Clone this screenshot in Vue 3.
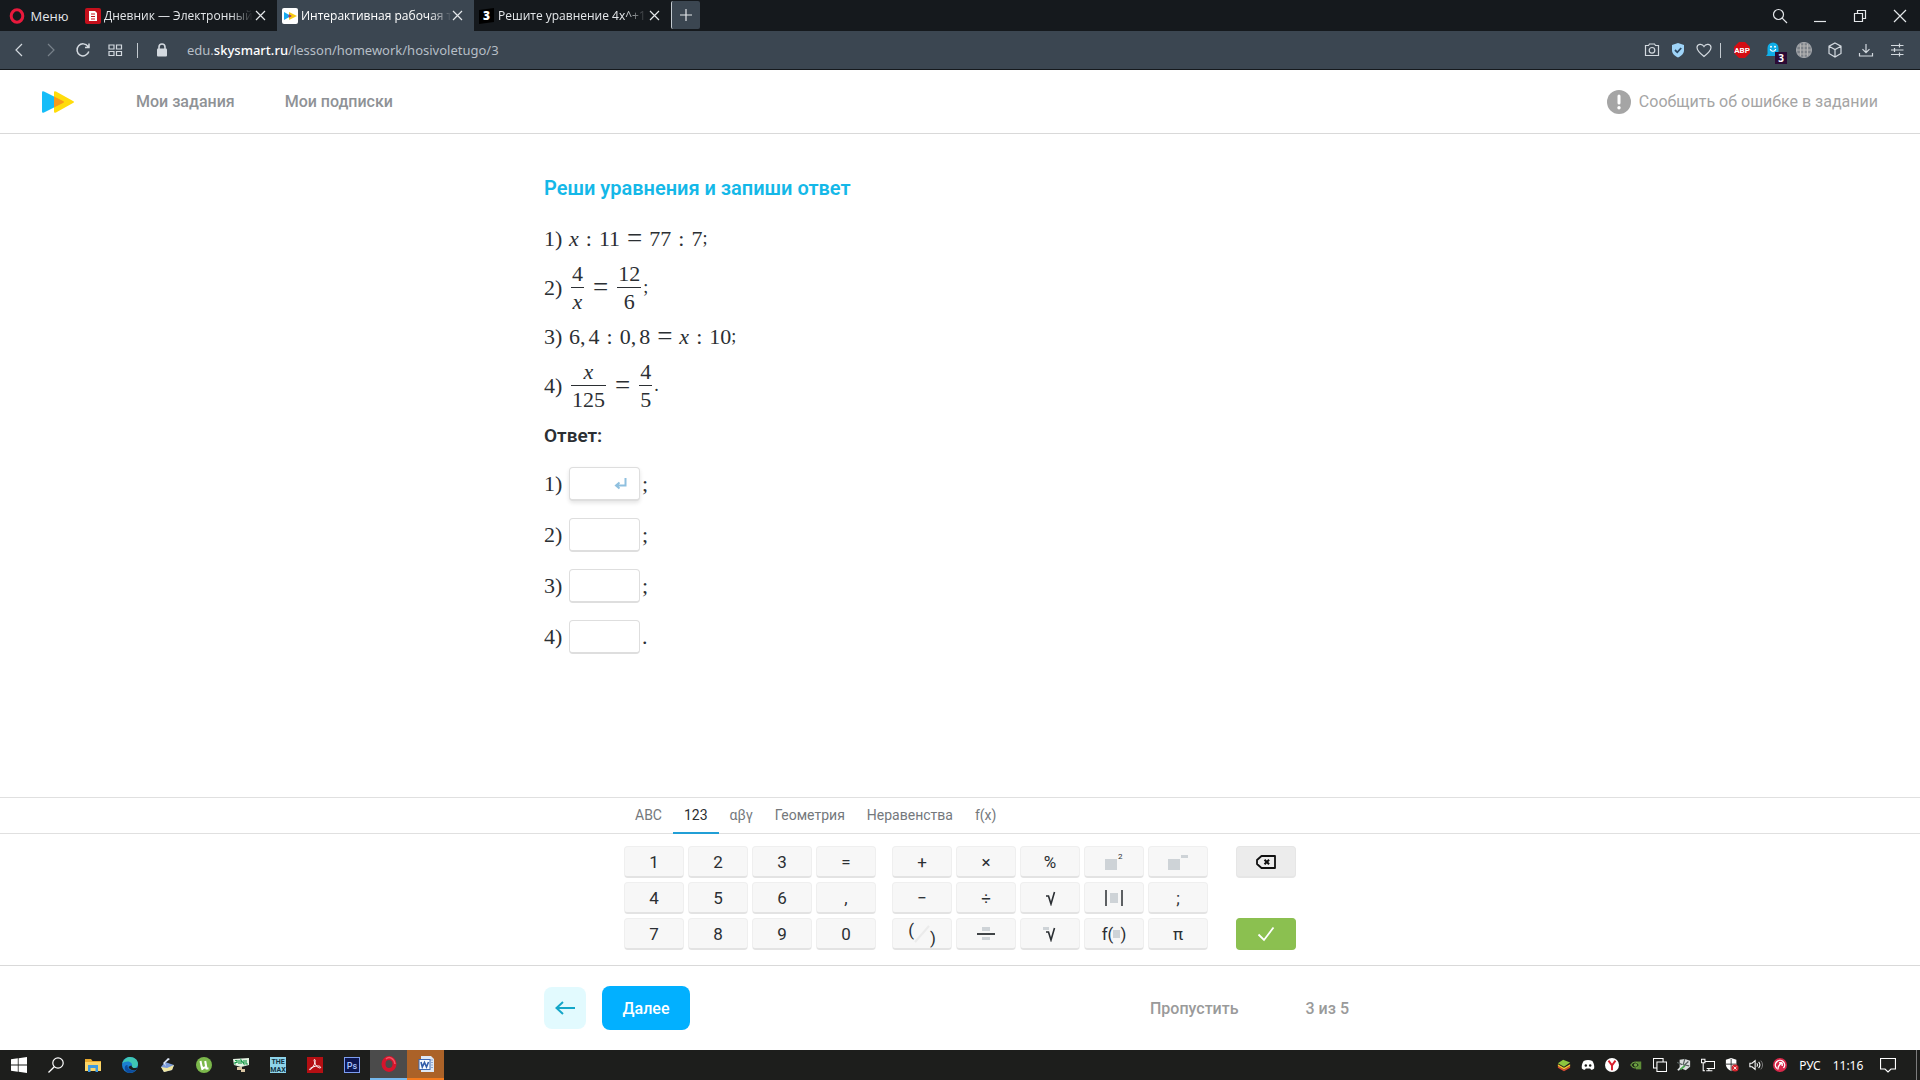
<script setup>
import { ref } from 'vue';

const tabs = [
  { id: 'diary', title: 'Дневник — Электронный' },
  { id: 'sky', title: 'Интерактивная рабочая т' },
  { id: 'znanija', title: 'Решите уравнение 4x^+1' },
];
const activeTab = ref('sky');

// условия: строка или дробь [числитель, знаменатель]
const equations = [
  ['x', ':', '11', '=', '77', ':', '7', ';'],
  [['4', 'x'], '=', ['12', '6'], ';'],
  ['6', ',', '4', ':', '0', ',', '8', '=', 'x', ':', '10', ';'],
  [['x', '125'], '=', ['4', '5'], '.'],
];

const answers = ref(['', '', '', '']);

const layouts = ['ABC', '123', 'αβγ', 'Геометрия', 'Неравенства', 'f(x)'];
const layout = ref('123');

const digits = ['1', '2', '3', '=', '4', '5', '6', ',', '7', '8', '9', '0'];
const operators = ['+', '×', '%', 'square', 'power', '−', '÷', '√', 'abs', ';', 'parens', 'frac', 'root', 'func', 'π'];

const tokenClass = (t) => {
  if (t === 'x') return 'var';
  if (t === ':') return 'rel';
  if (t === '=') return 'rel eq';
  if (t === ',') return 'comma';
  if (t === ';' || t === '.') return 'end';
  return '';
};

const press = (key) => {
  if (key.length === 1) answers.value[0] += key;
};
const erase = () => {
  answers.value[0] = answers.value[0].slice(0, -1);
};
</script>

<template>
  <div class="screen">
    <!-- вкладки браузера -->
    <div class="tabbar">
      <button class="menu">
        <svg width="16" height="16" viewBox="0 0 16 16"><ellipse cx="8" cy="8" rx="5.800" ry="6.200" fill="none" stroke="#e8193c" stroke-width="3" /></svg>
        Меню
      </button>
      <div v-for="tab in tabs" :key="tab.id" class="tab" :class="{ active: tab.id === activeTab }">
        <button class="tab-main" @click="activeTab = tab.id">
          <svg v-if="tab.id === 'diary'" width="16" height="16" viewBox="0 0 16 16">
            <rect width="16" height="16" rx="2" fill="#c4101c" />
            <path d="M4 3h6l2 2v8H4z" fill="#fff" />
            <path d="M6 6h4M6 8.5h4M6 11h4" stroke="#c4101c" stroke-width="1.2" />
          </svg>
          <svg v-else-if="tab.id === 'sky'" width="16" height="16" viewBox="0 0 16 16">
            <rect width="16" height="16" rx="2" fill="#fff" />
            <path d="M2 4l7 4-7 4z" fill="#16a9ee" />
            <path d="M7 4l8 4-8 4z" fill="#f6c914" />
            <path d="M7 6.8L9.2 8 7 9.2z" fill="#9b3c7c" stroke="#9b3c7c" />
          </svg>
          <svg v-else width="16" height="16" viewBox="0 0 16 16">
            <path d="M0 2l15-2v14l-15 2z" fill="#000" />
            <text x="4" y="12" font-size="12" font-weight="800" fill="#fff" font-family="Open Sans, sans-serif">3</text>
          </svg>
          <span class="tab-title">{{ tab.title }}</span>
        </button>
        <button class="tab-close" aria-label="Закрыть вкладку">
          <svg width="11" height="11" viewBox="0 0 11 11"><path d="M1 1l9 9M10 1l-9 9" /></svg>
        </button>
      </div>
      <button class="new-tab" aria-label="Новая вкладка">
        <svg width="12" height="12" viewBox="0 0 12 12"><path d="M6 0v12M0 6h12" /></svg>
      </button>
      <div class="window-buttons">
        <button aria-label="Поиск вкладок"><svg width="16" height="16" viewBox="0 0 16 16"><circle cx="6.5" cy="6.5" r="5" /><path d="M10.2 10.2L15 15" /></svg></button>
        <button aria-label="Свернуть"><svg width="14" height="14" viewBox="0 0 14 14"><path d="M1 12.5h12" /></svg></button>
        <button aria-label="Развернуть"><svg width="14" height="14" viewBox="0 0 14 14"><path d="M1.5 4.5h8v8h-8zM4.5 4.5v-3h8v8h-3" /></svg></button>
        <button aria-label="Закрыть"><svg width="14" height="14" viewBox="0 0 14 14"><path d="M1 1l12 12M13 1L1 13" /></svg></button>
      </div>
    </div>

    <!-- адресная строка -->
    <div class="toolbar">
      <button aria-label="Назад"><svg viewBox="0 0 16 16"><path d="M11 2L5 8l6 6" /></svg></button>
      <button class="dim" aria-label="Вперёд"><svg viewBox="0 0 16 16"><path d="M5 2l6 6-6 6" /></svg></button>
      <button aria-label="Обновить"><svg viewBox="0 0 16 16"><path d="M13.8 9.5A6 6 0 1 1 13 4.500M14 1.500v4h-4" stroke-width="1.5" /></svg></button>
      <button aria-label="Экспресс-панель"><svg viewBox="0 0 16 16"><path d="M2 3h5v4H2zM9.5 3h5v4h-5zM2 9.5h5v4H2zM9.5 9.5h5v4h-5z" /></svg></button>
      <span class="divider"></span>
      <svg class="lock" width="12" height="14" viewBox="0 0 12 14"><path d="M3 6V4a3 3 0 0 1 6 0v2" fill="none" stroke="#d3d9df" stroke-width="1.6" /><rect x="1" y="5.5" width="10" height="8" rx="1" fill="#d3d9df" /></svg>
      <a class="url" href="#">edu.<b>skysmart.ru</b>/lesson/homework/hosivoletugo/3</a>
      <div class="page-actions">
        <button aria-label="Снимок"><svg viewBox="0 0 16 16"><path d="M1.5 3.5h3l1-1.500h5l1 1.500h3v10h-13z" /><circle cx="8" cy="8.3" r="2.8" /></svg></button>
        <button aria-label="Защита"><svg viewBox="0 0 16 16"><path d="M8 1l6 2v5c0 4-3 6-6 7.500C5 14 2 12 2 8V3z" fill="#9fd4f8" stroke="none" /><path d="M5 8l2.300 2.300L11.200 6" stroke="#2b4a66" stroke-width="1.8" /></svg></button>
        <button aria-label="В закладки"><svg viewBox="0 0 16 16"><path d="M8 14.500C3 10.500 1 8.500 1 5.500 1 2 6 1 8 4.500 10 1 15 2 15 5.500c0 3-2 5-7 9z" /></svg></button>
      </div>
      <span class="divider right"></span>
      <div class="extensions">
        <button aria-label="AdBlock Plus">
          <svg viewBox="0 0 16 16"><path d="M5 0h6l5 5v6l-5 5H5l-5-5V5z" fill="#d40d12" stroke="none" /><text x="8" y="11" text-anchor="middle" font-size="8" font-weight="700" fill="#fff" stroke="none" font-family="Roboto, sans-serif">ABP</text></svg>
        </button>
        <button class="ghostery" aria-label="Ghostery">
          <svg viewBox="0 0 16 16"><path d="M2.500 6a5.500 5.500 0 0 1 11 0v6l1.500 2H1l1.500-2z" fill="#10aee8" stroke="none" /><path d="M5.300 7c.6 3 4.800 3 5.400 0" stroke="#fff" /><circle cx="6" cy="4.700" r="1" fill="#fff" stroke="none" /><circle cx="10" cy="4.700" r="1" fill="#fff" stroke="none" /></svg>
          <span class="counter">3</span>
        </button>
        <button aria-label="Прокси"><svg viewBox="0 0 16 16"><circle cx="8" cy="8" r="7.500" fill="#7b8087" stroke="#9a9ea4" /><path d="M8 .5v15M.5 8h15M2 4h12M2 12h12M4.500 2v12M11.500 2v12" stroke="#b3b3b3" /></svg></button>
        <button aria-label="Расширения"><svg viewBox="0 0 16 16"><path d="M8 1l6 3.200v7.300L8 15l-6-3.500V4.200zM2 4.200l6 3.300 6-3.300M8 7.500V15" /></svg></button>
        <button aria-label="Загрузки"><svg viewBox="0 0 16 16"><path d="M8 2v8.500M4.500 7.200L8 10.700l3.500-3.500M1.500 11v3h13v-3" /></svg></button>
        <button aria-label="Простые настройки"><svg viewBox="0 0 16 16"><path d="M2 3.500h12.500M2 8h12.500M2 12.500h12.500M10.500 1.500v4M5.500 6v4M10.500 10.500v4" /></svg></button>
      </div>
    </div>

    <header class="header">
      <a class="logo" href="#" aria-label="Skysmart">
        <svg width="34" height="24" viewBox="0 0 34 24">
          <path d="M1 2.500q0-2 2-1L22 11q2 1 0 2L3 22.500q-2 1-2-1z" fill="#16bdf8" />
          <path d="M13 2.500q0-2 2-1L32 11q2 1 0 2L15 22.500q-2 1-2-1z" fill="#ffdc0c" />
          <path d="M13 6.500L22 11q2 1 0 2l-9 4.500z" fill="#f79a1c" />
        </svg>
      </a>
      <nav class="nav">
        <a href="#">Мои задания</a>
        <a href="#">Мои подписки</a>
      </nav>
      <button class="report">
        <svg width="24" height="24" viewBox="0 0 24 24"><circle cx="12" cy="12" r="12" fill="#a5a5a5" /><path d="M12 6v7" stroke="#fff" stroke-width="3" stroke-linecap="round" /><circle cx="12" cy="17.800" r="1.700" fill="#fff" /></svg>
        Сообщить об ошибке в задании
      </button>
    </header>

    <main class="content">
      <div class="column">
        <h1>Реши уравнения и запиши ответ</h1>
        <div v-for="(eq, i) in equations" :key="i" class="equation">
          <span class="number">{{ i + 1 }})</span>
          <template v-for="(t, j) in eq" :key="j">
            <span v-if="Array.isArray(t)" class="fraction">
              <span v-for="(part, k) in t" :key="k" :class="tokenClass(part)">{{ part }}</span>
            </span>
            <span v-else :class="tokenClass(t)">{{ t }}</span>
          </template>
        </div>
        <h2>Ответ:</h2>
        <div v-for="(a, i) in answers" :key="i" class="answer">
          <label class="number" :for="'answer' + i">{{ i + 1 }})</label>
          <span class="field" :class="{ focused: i === 0 }">
            <input :id="'answer' + i" v-model="answers[i]" type="text" />
            <svg v-if="i === 0" class="enter" width="13" height="13" viewBox="0 0 13 13"><path d="M11.500 1v7.500H3M5.500 5.500l-3.500 3 3.500 3" fill="none" stroke="#8fc0df" stroke-width="2" /></svg>
          </span>
          <span class="mark">{{ i === 3 ? '.' : ';' }}</span>
        </div>
      </div>
    </main>

    <!-- экранная клавиатура -->
    <section class="keyboard">
      <div class="layouts">
        <div class="keyboard-inner">
          <button v-for="l in layouts" :key="l" :class="{ current: l === layout }" @click="layout = l">{{ l }}</button>
        </div>
      </div>
      <div class="keyboard-inner keys">
        <div class="pad digits">
          <button v-for="k in digits" :key="k" class="key" @click="press(k)">{{ k }}</button>
        </div>
        <div class="pad operators">
          <button v-for="k in operators" :key="k" class="key" :aria-label="k" @click="press(k)">
            <svg v-if="k === 'square'" width="20" height="20" viewBox="0 0 20 20"><rect x="1" y="7" width="12" height="11" fill="#ced3d7" /><text x="14" y="7" font-size="8" fill="#2b2f33" font-family="Roboto, sans-serif">2</text></svg>
            <svg v-else-if="k === 'power'" width="20" height="20" viewBox="0 0 20 20"><rect x="0" y="7" width="12" height="11" fill="#ced3d7" /><rect x="13" y="3" width="7" height="3" fill="#ced3d7" /></svg>
            <svg v-else-if="k === 'abs'" width="18" height="18" viewBox="0 0 18 18"><path d="M1 1v16M17 1v16" stroke="#2b2f33" stroke-width="1.5" /><rect x="5" y="4" width="8" height="10" fill="#ced3d7" /></svg>
            <svg v-else-if="k === 'frac'" width="18" height="14" viewBox="0 0 18 14"><rect x="5" y="0" width="8" height="4" fill="#ced3d7" /><path d="M0 7h18" stroke="#2b2f33" stroke-width="1.8" /><rect x="5" y="10" width="8" height="3" fill="#ced3d7" /></svg>
            <svg v-else-if="k === 'root' || k === '√'" width="14" height="16" viewBox="0 0 14 16"><rect v-if="k === 'root'" width="6" height="3" y="1" fill="#ced3d7" /><path d="M3 6h2.500L8 14l3.500-12" fill="none" stroke="#2b2f33" stroke-width="1.6" /></svg>
            <span v-else-if="k === 'func'" class="func">f(<i></i>)</span>
            <span v-else-if="k === 'parens'" class="parens"><span>(</span><svg width="16" height="18" viewBox="0 0 16 18"><path d="M1 17L15 1" stroke="#ebebeb" stroke-width="2" /></svg><span>)</span></span>
            <template v-else>{{ k }}</template>
          </button>
        </div>
        <div class="pad actions">
          <button class="key erase" aria-label="Стереть" @click="erase">
            <svg width="20" height="14" viewBox="0 0 20 14"><path d="M5.500 1H19v12H5.500L1 9V5z" fill="none" stroke="#111" stroke-width="1.8" stroke-linejoin="round" /><path d="M8.500 4.700l4.600 4.600M13.100 4.700L8.500 9.300" stroke="#111" stroke-width="2" /></svg>
          </button>
          <button class="key confirm" aria-label="Готово">
            <svg width="18" height="16" viewBox="0 0 18 16"><path d="M1.500 8.500L7 14 16.500 1.500" fill="none" stroke="#fff" stroke-width="1.8" /></svg>
          </button>
        </div>
      </div>
    </section>

    <footer class="footer">
      <div class="column steps">
        <button class="back" aria-label="Предыдущее задание">
          <svg width="20" height="14" viewBox="0 0 20 14"><path d="M20 7H1.500M8 1L1.500 7 8 13" fill="none" stroke="#14a6c8" stroke-width="2" /></svg>
        </button>
        <button class="next">Далее</button>
        <button class="skip">Пропустить</button>
        <span class="progress">3 из 5</span>
      </div>
    </footer>

    <!-- панель задач -->
    <div class="taskbar">
      <button aria-label="Пуск"><svg viewBox="0 0 16 16"><path d="M0 2.300L6.800 1.300v6.300H0zM7.600 1.200L16 0v7.600H7.600zM0 8.400h6.800v6.300L0 13.700zM7.600 8.400H16V16l-8.400-1.200z" fill="#fff" /></svg></button>
      <button aria-label="Поиск"><svg viewBox="0 0 16 16"><circle cx="10" cy="6" r="5.200" fill="none" stroke="#fff" stroke-width="1.2" /><path d="M6.300 9.700L.5 15.500" stroke="#fff" stroke-width="1.3" /></svg></button>
      <button aria-label="Проводник"><svg viewBox="0 0 16 16"><path d="M0 2h6l1.500 2H16v10H0z" fill="#e9a92c" /><path d="M0 5h16v9H0z" fill="#fbd567" /><path d="M3 8h10v7h-2.500v-4h-5v4H3z" fill="#3d9ae0" /></svg></button>
      <button aria-label="Edge"><svg viewBox="0 0 16 16"><circle cx="8" cy="8" r="8" fill="#1b7fd0" /><path d="M.3 6.500C1.500 2.500 4.500 0 8 0c4.500 0 8 3 8 7 0 3-2.500 4.500-5 4-1.500-.3-1.500-1-1-2 .5-2-1-4.500-4.500-4.500-2 0-4 .7-5.200 2z" fill="#3fc6b4" /><path d="M5.500 8c-.5 3.500 3 6.500 8.500 5a8 8 0 0 1-6 3C4 16 2 12 3 9.500 3.500 8.500 4.500 8 5.500 8z" fill="#0d4c9e" /><path d="M9.500 8.500c0 2 2.500 3.500 6 2-.3 1-.8 1.800-1.500 2.500-4 1-7-1-7.500-3 .8-.8 1.800-1.200 3-1.500z" fill="#1d1e1c" /></svg></button>
      <button aria-label="Почта"><svg viewBox="0 0 16 16"><path d="M2 10l4-5 9 3-2 5-8 2z" fill="#7b9bd8" /><path d="M2 10l6 1 7-3-2 5-8 2z" fill="#f0e6a0" /><path d="M9 1L4 6l3 3-1-3 5-4z" fill="#dfe8f8" /></svg></button>
      <button aria-label="uTorrent"><svg viewBox="0 0 16 16"><circle cx="8" cy="8" r="8" fill="#7bb84b" /><path d="M4.500 4l1 5c.5 2.500 4 2.500 4.500 0l-.8-5 1.300 7.500h2M5.500 9l1 4" fill="none" stroke="#fff" stroke-width="2" /></svg></button>
      <button aria-label="Игра"><svg viewBox="0 0 16 16"><path d="M0 2l16-1v7l-8 2-7-2z" fill="#e5f4e4" /><path d="M2 3.500h2v2H2v2M6 3v4M8 7V3l3 4V3M13 3v4h2" fill="none" stroke="#1b9c4c" stroke-width="1.2" /><path d="M4 10h5v2h3v3H8v-2H4z" fill="#d8c5a2" /></svg></button>
      <button aria-label="The Max"><svg viewBox="0 0 16 16"><rect width="16" height="16" fill="#8ed4ea" /><text x="8" y="7" text-anchor="middle" font-size="7" font-weight="700" fill="#103242" font-family="Roboto, sans-serif">THE</text><text x="8" y="15" text-anchor="middle" font-size="7" font-weight="700" fill="#103242" font-family="Roboto, sans-serif">MAX</text></svg></button>
      <button aria-label="Acrobat"><svg viewBox="0 0 16 16"><rect width="16" height="16" fill="#b50f13" /><path d="M7.500 2.500c1.500 0 .5 4-1 6.500S3 13.500 2.500 12.500 7 9.300 10 9s4 1 3.500 1.800-4-.8-5-3.300-2-5-1-5z" fill="none" stroke="#fff" /></svg></button>
      <button aria-label="Photoshop"><svg viewBox="0 0 16 16"><rect x=".5" y=".5" width="15" height="15" fill="#0c1650" stroke="#7c9df0" /><text x="8" y="11.500" text-anchor="middle" font-size="9" font-weight="500" fill="#a9c4fb" font-family="Roboto, sans-serif">Ps</text></svg></button>
      <button class="running" aria-label="Opera"><svg viewBox="0 0 16 16"><ellipse cx="8" cy="8" rx="5.500" ry="6" fill="none" stroke="#d7152c" stroke-width="4" /><path d="M5 3c3-3 8-1 9 5" fill="none" stroke="#f25465" stroke-width="1.5" /></svg></button>
      <button class="attention" aria-label="Word"><svg viewBox="0 0 16 16"><path d="M3 0h10l3 3v13H3z" fill="#dfe8f5" /><path d="M11 4h4M13 6.500h2M13 9h2M13 11.500h2" stroke="#8ba5d0" /><rect x="1" y="3.500" width="11" height="10" fill="#f7faff" stroke="#3c68b2" /><path d="M3 6l1.300 5L6.500 6.500 8.500 11l2-5" fill="none" stroke="#2f5aa8" stroke-width="1.6" /></svg></button>
      <div class="tray">
        <span><svg viewBox="0 0 16 16"><path d="M1 9l7 4 7-4v2l-7 4-7-4z" fill="#d94a35" /><path d="M1 7l7 4 7-4v2l-7 4-7-4z" fill="#f3c52e" /><path d="M1 6l6-4 8 3-7 5z" fill="#8dc63f" /></svg></span>
        <span><svg viewBox="0 0 16 16"><path d="M3 3.500C6 2 10 2 13 3.500c2 3 2.500 6 2 8.500-1 1-2 1.300-3.500 1.500l-1-1.500h-5l-1 1.500C3 13.300 2 13 1 12c-.5-2.500 0-5.500 2-8.500z" fill="#fff" /><circle cx="5.500" cy="8.500" r="1.400" fill="#1d1e1c" /><circle cx="10.500" cy="8.500" r="1.400" fill="#1d1e1c" /></svg></span>
        <span><svg viewBox="0 0 16 16"><circle cx="8" cy="8" r="8" fill="#fff" /><path d="M4 3l4 5.500L12 3M8 8v6" fill="none" stroke="#d81e2c" stroke-width="2.2" /></svg></span>
        <span><svg viewBox="0 0 16 16"><path d="M8 4h6v9H8z" fill="#5d8d37" /><path d="M2 8c3-4.500 7-4.500 10 0-3 4.500-7 4.500-10 0z" fill="#1e2b17" stroke="#6fa244" stroke-width="1.2" /><circle cx="7.500" cy="8" r="2" fill="#6fa244" /></svg></span>
        <span><svg viewBox="0 0 16 16"><path d="M4.500 4.500h11v11h-11zM4 11.500H.5V.5h11V4" fill="none" stroke="#fff" stroke-width="1.2" /></svg></span>
        <span><svg viewBox="0 0 16 16"><path d="M3 2l6-1 6 2v7l-5 4-7-3z" fill="#d9dcdc" /><path d="M0 5l9 4M2 14L13 4M9 1l-3 10M9 8l5 1" stroke="#555e5c" stroke-width="1.4" /><path d="M1 14l6-6" stroke="#e8ecec" stroke-width="2" /><path d="M4 13l5-4" stroke="#4fae52" stroke-width="2" /></svg></span>
        <span><svg viewBox="0 0 16 16"><path d="M4.500 4h11v8h-9M9 12v2.500M6 14.500h7M.5 1.500h4v4h-4zM2.500 5.500v9h2" fill="none" stroke="#fff" stroke-width="1.2" /></svg></span>
        <span><svg viewBox="0 0 16 16"><path d="M7 0l6 2v5c0 4-3 6-6 8-3-2-6-4-6-8V2z" fill="#fff" /><path d="M7 1v14M1 7h12" stroke="#222" /><circle cx="11.500" cy="11.500" r="4" fill="#d3252d" /><path d="M9.800 9.800l3.400 3.400M13.200 9.800l-3.400 3.400" stroke="#fff" /></svg></span>
        <span><svg viewBox="0 0 16 16"><path d="M1 6h2.500L7 3v10L3.500 10H1zM9 6q1.500 2 0 4M11 4.500q3 3.500 0 7" fill="none" stroke="#fff" stroke-width="1.2" /><path d="M13.500 3q4 5 0 10" fill="none" stroke="#888" /></svg></span>
        <span><svg viewBox="0 0 16 16"><circle cx="8" cy="8" r="8" fill="#d8284a" /><path d="M4.500 12A5.300 5.300 0 1 1 12 11.500" fill="none" stroke="#fff" stroke-width="1.6" /><path d="M5.500 13c0-3 1-5 4.500-7.500M10.500 5.500v3.500M10.500 5.500H7" fill="none" stroke="#fff" stroke-width="1.6" /></svg></span>
        <span class="lang">РУС</span>
        <span class="clock">11:16</span>
        <button class="notifications" aria-label="Уведомления"><svg viewBox="0 0 16 16"><path d="M.5 1.500h15v10.500H11l-3 3-3-3H.5z" fill="none" stroke="#fff" stroke-width="1.2" /></svg></button>
      </div>
    </div>
  </div>
</template>

<style>
body {
  margin: 0;
}
</style>

<style scoped>
.screen {
  display: flex;
  flex-direction: column;
  min-height: 100vh;
  background: #fff;
  font-family: Roboto, "Liberation Sans", sans-serif;
  color: #2b2f33;
}

* {
  box-sizing: border-box;
}

button {
  display: flex;
  align-items: center;
  justify-content: center;
  padding: 0;
  border: none;
  background: none;
  font: inherit;
  color: inherit;
  cursor: pointer;
}

a {
  color: inherit;
  text-decoration: none;
}

/* вкладки */
.tabbar {
  display: flex;
  height: 31px;
  background: #15191d;
  color: #e4e7ea;
  font-family: "Open Sans", "Noto Sans", sans-serif;
  font-size: 12px;
}

.menu {
  gap: 6px;
  width: 80px;
  padding-right: 3px;
  font-size: 13px;
}

.tab {
  display: flex;
  align-items: center;
  width: 197px;
  padding: 0 9px 0 5px;
}

.tab.active {
  background: #3b4651;
  color: #fff;
}

.tab-main {
  flex: 1;
  justify-content: flex-start;
  gap: 3px;
  min-width: 0;
}

.tab-main svg {
  flex: none;
}

.tab-title {
  flex: 1;
  text-align: left;
  white-space: nowrap;
  mask-image: linear-gradient(to right, #000 85%, transparent);
}

.tab-close {
  width: 15px;
}

.tab-close svg,
.new-tab svg,
.window-buttons svg {
  fill: none;
  stroke: #e4e7ea;
  stroke-width: 1.2;
}

.new-tab {
  width: 29px;
  height: 28px;
  margin-top: 1px;
  border-left: 1px solid #c3cad0;
  border-radius: 2px;
  background: #3b4651;
}

.window-buttons {
  display: flex;
  margin-left: auto;
}

.window-buttons button {
  width: 40px;
}

/* адресная строка */
.toolbar {
  display: flex;
  align-items: center;
  height: 39px;
  padding: 0 8px 0 3px;
  border-bottom: 1px solid #15191d;
  background: #3b4651;
  color: #b6bec6;
  font-family: "Noto Sans", sans-serif;
  font-size: 13px;
}

.toolbar button {
  width: 32px;
  height: 32px;
}

.toolbar button svg {
  width: 16px;
  height: 16px;
  fill: none;
  stroke: #d3d9df;
  stroke-width: 1.2;
}

.toolbar .dim {
  opacity: 0.4;
}

.divider {
  width: 1px;
  height: 15px;
  margin: 0 18px 0 6px;
  background: #c3cad0;
}

.divider.right {
  margin: 0 5px 0 3px;
}

.lock {
  margin-right: 19px;
}

.url b {
  color: #fff;
  font-weight: 500;
}

.page-actions {
  display: flex;
  margin-left: auto;
}

.toolbar .page-actions button {
  width: 26px;
}

.extensions {
  display: flex;
}

.toolbar .extensions button {
  width: 31px;
}

.ghostery {
  position: relative;
}

.counter {
  position: absolute;
  right: 1px;
  bottom: 2px;
  width: 12px;
  background: #2b0a35;
  color: #fff;
  font-size: 10px;
  font-weight: 700;
  line-height: 12px;
}

/* шапка */
.header {
  display: flex;
  align-items: center;
  height: 64px;
  padding: 0 42px 0 41px;
  border-bottom: 1px solid #d9d9d9;
  color: #8f9296;
  font-size: 16px;
}

.logo {
  display: flex;
}

.nav {
  display: flex;
  gap: 50px;
  margin-left: 61px;
  font-weight: 500;
}

.report {
  gap: 8px;
  margin-left: auto;
  color: #a5a5a5;
}

/* задание */
.content {
  flex: 1;
  padding: 42px 0;
}

.column {
  width: 100%;
  max-width: 832px;
  margin: 0 auto;
}

h1 {
  margin: 0 0 17px;
  color: #14b8e8;
  font-size: 20px;
  font-weight: 600;
  line-height: 24px;
}

h2 {
  margin: 0;
  font-size: 19px;
  font-weight: 600;
  line-height: 45px;
}

.equation,
.answer {
  display: flex;
  align-items: center;
  min-height: 43px;
  font-family: "Liberation Serif", serif;
  font-size: 22px;
  line-height: 27px;
}

.number {
  width: 25px;
}

.var {
  font-style: italic;
}

.rel {
  margin: 0 7px;
}

.eq {
  font-size: 27px;
}

.comma {
  margin-right: 3px;
}

.end {
  font-size: 18px;
}

.fraction {
  display: flex;
  flex-direction: column;
  margin: 0 2px;
  text-align: center;
}

.fraction span {
  padding: 0 1px;
}

.fraction span:first-child {
  border-bottom: 1px solid #2b2f33;
}

.answer {
  min-height: 51px;
}

.field {
  position: relative;
  display: flex;
  width: 71px;
}

.field input {
  width: 100%;
  height: 34px;
  padding: 0 8px;
  border: 1px solid #dedede;
  border-bottom: 2px solid #dedede;
  border-radius: 4px;
  outline: none;
  background: #fff;
  font: inherit;
}

.focused input {
  box-shadow: 0 2px 4px #e4e4e4;
}

.enter {
  position: absolute;
  top: 10px;
  right: 13px;
}

.mark {
  margin-left: 2px;
}

/* клавиатура */
.keyboard {
  border-top: 1px solid #e0e0e0;
}

.layouts {
  border-bottom: 1px solid #e0e0e0;
}

.keyboard-inner {
  display: flex;
  width: 100%;
  max-width: 672px;
  margin: 0 auto;
}

.layouts button {
  height: 36px;
  margin-bottom: -1px;
  padding: 0 11px;
  border-bottom: 2px solid transparent;
  color: #74787c;
  font-size: 14px;
}

.layouts .current {
  border-color: #219fd6;
  color: #2b2f33;
}

.keys {
  padding: 12px 0 15px;
}

.pad {
  display: grid;
  gap: 4px;
  grid-auto-rows: 32px;
}

.digits {
  grid-template-columns: repeat(4, 60px);
}

.operators {
  grid-template-columns: repeat(5, 60px);
  margin-left: 16px;
}

.actions {
  grid-template-columns: 60px;
  margin-left: auto;
}

.key {
  border: 1px solid #efefef;
  border-bottom: 2px solid #e3e3e3;
  border-radius: 4px;
  background: #f7f7f7;
  font-size: 17px;
}

.parens {
  display: flex;
  align-items: center;
  line-height: 20px;
}

.parens span:first-child {
  padding-bottom: 8px;
}

.parens span:last-child {
  padding-top: 8px;
}

.func {
  display: flex;
  align-items: center;
}

.func i {
  width: 7px;
  height: 8px;
  background: #ced3d7;
}

.erase {
  border-color: #e6e6e6;
  background: #ececec;
}

.confirm {
  grid-row: 3;
  border-color: #8bbf50;
  background: #8bc050;
}

/* низ страницы */
.footer {
  display: flex;
  align-items: center;
  height: 85px;
  border-top: 1px solid #d9d9d9;
  color: #9a9a9a;
  font-size: 16px;
  font-weight: 500;
}

.steps {
  display: flex;
  align-items: center;
  padding-right: 27px;
}

.back {
  width: 42px;
  height: 42px;
  border-radius: 8px;
  background: #e2fafe;
}

.next {
  width: 88px;
  height: 44px;
  margin-left: 16px;
  border-radius: 8px;
  background: #02b0ff;
  color: #fff;
}

.skip {
  margin-left: auto;
}

.progress {
  margin-left: 67px;
}

/* панель задач */
.taskbar {
  display: flex;
  height: 30px;
  background: #1d1e1c;
  color: #fff;
  font-family: "Noto Sans", sans-serif;
  font-size: 12px;
}

.taskbar button {
  width: 37px;
}

.taskbar button svg {
  width: 16px;
  height: 16px;
}

.taskbar .running {
  border-bottom: 2px solid #76b9ed;
  background: #4b4b4b;
}

.taskbar .attention {
  border-bottom: 2px solid #f47a1c;
  background: #ab6228;
}

.tray {
  display: flex;
  align-items: center;
  margin-left: auto;
  margin-right: 3px;
  border-right: 1px solid #7c7c7c;
}

.tray span {
  display: flex;
  justify-content: center;
  width: 24px;
}

.tray span svg {
  width: 14px;
  height: 14px;
}

.tray .lang {
  width: 36px;
}

.tray .clock {
  width: 40px;
}

.taskbar .notifications {
  width: 40px;
  margin-right: 8px;
}
</style>
